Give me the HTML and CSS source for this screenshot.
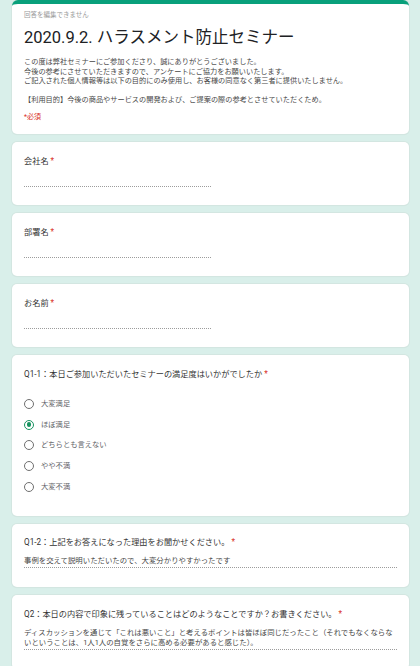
FILE: index.html
```html
<!DOCTYPE html>
<html lang="ja">
<head>
<meta charset="utf-8">
<title>2020.9.2. ハラスメント防止セミナー</title>
<link rel="stylesheet" href="styles.css">
</head>
<body>
<main class="form">
  <section class="card header">
    <p class="note">回答を編集できません</p>
    <h1 class="title">2020.9.2. ハラスメント防止セミナー</h1>
    <div class="desc">
      <p>この度は弊社セミナーにご参加くださり、誠にありがとうございました。</p>
      <p>今後の参考にさせていただきますので、アンケートにご協力をお願いいたします。</p>
      <p>ご記入された個人情報等は以下の目的にのみ使用し、お客様の同意なく第三者に提供いたしません。</p>
      <p class="blank">&nbsp;</p>
      <p>【利用目的】今後の商品やサービスの開発および、ご提案の際の参考とさせていただくため。</p>
    </div>
    <p class="required">*必須</p>
  </section>

  <section class="card short">
    <h2 class="q">会社名<span class="ast"> *</span></h2>
    <div class="input half"></div>
  </section>

  <section class="card short">
    <h2 class="q">部署名<span class="ast"> *</span></h2>
    <div class="input half"></div>
  </section>

  <section class="card short">
    <h2 class="q">お名前<span class="ast"> *</span></h2>
    <div class="input half"></div>
  </section>

  <section class="card choice">
    <h2 class="q">Q1-1：本日ご参加いただいたセミナーの満足度はいかがでしたか<span class="ast"> *</span></h2>
    <ul class="options">
      <li class="opt"><span class="radio"></span><span class="opt-label">大変満足</span></li>
      <li class="opt"><span class="radio checked"></span><span class="opt-label">ほぼ満足</span></li>
      <li class="opt"><span class="radio"></span><span class="opt-label">どちらとも言えない</span></li>
      <li class="opt"><span class="radio"></span><span class="opt-label">やや不満</span></li>
      <li class="opt"><span class="radio"></span><span class="opt-label">大変不満</span></li>
    </ul>
  </section>

  <section class="card para first">
    <h2 class="q">Q1-2：上記をお答えになった理由をお聞かせください。<span class="ast"> *</span></h2>
    <p class="answer">事例を交えて説明いただいたので、大変分かりやすかったです</p>
  </section>

  <section class="card para">
    <h2 class="q">Q2：本日の内容で印象に残っていることはどのようなことですか？お書きください。<span class="ast"> *</span></h2>
    <p class="answer">ディスカッションを通じて「これは悪いこと」と考えるポイントは皆ほぼ同じだったこと（それでもなくならないということは、1人1人の自覚をさらに高める必要があると感じた）。</p>
  </section>
</main>
</body>
</html>
```

FILE: styles.css
```css
* {
  box-sizing: border-box;
}

html, body {
  margin: 0;
  padding: 0;
}

body {
  background: #d9efea;
  font-family: Roboto, "Noto Sans CJK JP", "Noto Sans", sans-serif;
  color: #202124;
  height: 666px;
  overflow: hidden;
}

.form {
  display: flex;
  flex-direction: column;
  gap: 8px;
  padding: 0 11px 0 12px;
}

.card {
  background: #ffffff;
  border-radius: 5px;
  box-shadow: 0 0 0 1px #d3e6e1, 0 1px 1px rgba(0, 0, 0, 0.06);
  padding: 13px 12px 18px;
}

.card p,
.card h1,
.card h2,
.card ul {
  margin: 0;
  padding: 0;
}

/* header card */
.header {
  border-top: 4px solid #09a07b;
  border-radius: 6px 6px 5px 5px;
  padding: 6px 12px 12px;
}

.note {
  font-size: 6.5px;
  line-height: 10px;
  color: #9a9a9a;
}

.title {
  margin-top: 6px !important;
  font-size: 16.5px;
  line-height: 24px;
  font-weight: 400;
  color: #202124;
  white-space: nowrap;
}

.desc {
  margin-top: 7px;
  font-size: 7.2px;
  line-height: 9.5px;
  color: #474747;
  white-space: nowrap;
}

.required {
  margin-top: 7.5px !important;
  font-size: 7px;
  line-height: 10px;
  color: #d93025;
}

/* questions */
.q {
  font-size: 8.2px;
  line-height: 12px;
  font-weight: 400;
  color: #333333;
  white-space: nowrap;
}

.ast {
  color: #d93025;
}

.input {
  margin-top: 7px;
  height: 13px;
  border-bottom: 1px dotted #9c9c9c;
}

.half {
  width: 187px;
}

/* choice */
.choice {
  padding-bottom: 19px;
}

.options {
  list-style: none;
  margin-top: 13.5px !important;
  display: flex;
  flex-direction: column;
}

.opt {
  display: flex;
  align-items: center;
  gap: 7px;
  height: 20.7px;
}

.radio {
  position: relative;
  flex: none;
  width: 10px;
  height: 10px;
  border: 1.3px solid #6f6f6f;
  border-radius: 50%;
}

.radio.checked {
  border-color: #17935f;
}

.radio.checked::after {
  content: "";
  position: absolute;
  left: 50%;
  top: 50%;
  width: 4.6px;
  height: 4.6px;
  margin: -2.3px 0 0 -2.3px;
  border-radius: 50%;
  background: #17935f;
}

.opt-label {
  font-size: 7.3px;
  line-height: 10px;
  color: #5f6368;
}

/* paragraph answers */
.para {
  padding-top: 13px;
  padding-bottom: 19px;
}

.para.first {
  padding-top: 12px;
}

.answer {
  margin-top: 8px !important;
  font-size: 7.4px;
  line-height: 10px;
  color: #474747;
  border-bottom: 1px dotted #9c9c9c;
  padding-bottom: 1px !important;
}
```
